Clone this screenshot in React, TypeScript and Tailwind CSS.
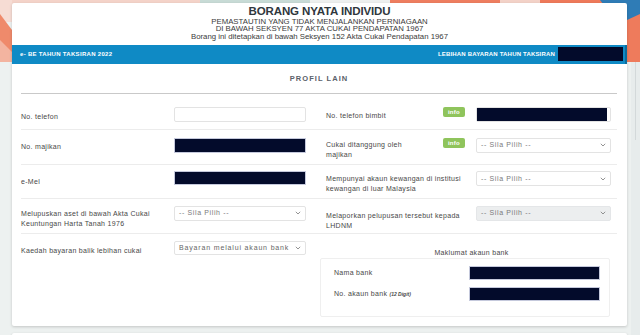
import type { ReactNode } from "react";

const BLACK = "bg-[#030b2b]";

function Chevron() {
  return (
    <svg width="6" height="4" viewBox="0 0 6 4" className="shrink-0">
      <path d="M0.8 0.8 L3 3 L5.2 0.8" fill="none" stroke="#777" strokeWidth="0.8" />
    </svg>
  );
}

function Select({ text, disabled, wide }: { text: string; disabled?: boolean; wide?: boolean }) {
  return (
    <div
      className={
        "h-full flex items-center justify-between pl-[4px] pr-[4px] border rounded-[2px] " +
        (disabled ? "bg-[#eceeef] border-[#e4e6e8]" : "bg-white border-[#e3e3e3]")
      }
    >
      <span
        className={
          "text-[7px] text-[#7a7a7a] whitespace-nowrap " +
          (wide ? "tracking-[0.12em] text-[#666]" : "tracking-[0.09em]")
        }
      >
        {text}
      </span>
      <Chevron />
    </div>
  );
}

function Masked() {
  return <div className={`h-full w-full ${BLACK} border border-[#c5c9dc]`} />;
}

function Info() {
  return (
    <div className="w-[22px] h-[10px] rounded-[2px] bg-[#8fc45c] flex items-center justify-center">
      <span className="text-[6px] font-bold text-white tracking-[0.05em] leading-none">info</span>
    </div>
  );
}

function Label({ children, pt }: { children: ReactNode; pt: string }) {
  return (
    <div className={`text-[7px] leading-[10px] tracking-[0.3px] text-[#474747] ${pt}`}>{children}</div>
  );
}

export default function App() {
  return (
    <div className="relative w-[640px] h-[335px] overflow-hidden bg-[#edf1f0] font-['Liberation_Sans',Arial,sans-serif]">
      {/* background decoration */}
      <svg className="absolute inset-0" width="640" height="335" viewBox="0 0 640 335">
        <rect x="0" y="0" width="200" height="6" fill="#f4d3c9" />
        <rect x="0" y="0" width="12" height="22" fill="#f6dcd4" />
        <polygon points="0,14 12,30 12,62 0,62" fill="#ef8a6b" />
        <polygon points="0,40 12,52 12,62 0,62" fill="#f3b4a0" />
        <rect x="200" y="0" width="110" height="6" fill="#c8dbd6" />
        <rect x="310" y="0" width="80" height="6" fill="#eef0ef" />
        <rect x="390" y="0" width="110" height="6" fill="#ee7e60" />
        <rect x="500" y="0" width="40" height="6" fill="#f3d2c8" />
        <rect x="540" y="0" width="80" height="6" fill="#ee7a5b" />
        <polygon points="600,0 640,0 640,26 627,36" fill="#2f7cb6" />
        <polygon points="627,20 640,14 640,62 627,62" fill="#ee7b5c" />
        <rect x="631" y="62" width="9" height="273" fill="#e7ecec" />
        <rect x="635" y="62" width="1" height="78" fill="#d3d9da" />
      </svg>

      <div className="relative pt-[3px] pl-[12px] pr-[13px] flex flex-col gap-[7px]">
        <div className="bg-white rounded-[2px] shadow-[0_1px_3px_rgba(0,0,0,0.18)] flex flex-col">
          {/* header */}
          <div className="pt-[3px] flex flex-col items-center text-[#2f373d]">
            <div className="text-[11.5px] font-bold leading-[11.5px] tracking-[-0.01em]">BORANG NYATA INDIVIDU</div>
            <div className="text-[7.8px] leading-[7.6px] text-[#3a3a3a] text-center">
              <div>PEMASTAUTIN YANG TIDAK MENJALANKAN PERNIAGAAN</div>
              <div>DI BAWAH SEKSYEN 77 AKTA CUKAI PENDAPATAN 1967</div>
              <div>Borang ini ditetapkan di bawah Seksyen 152 Akta Cukai Pendapatan 1967</div>
            </div>
          </div>

          {/* blue bar */}
          <div className="mt-[4.5px] h-[19px] bg-[#0f8ac5] border-r-[2px] border-[#0b6c9c] flex items-center justify-between pl-[8px] pr-[2px]">
            <span className="text-[6px] font-bold text-white tracking-[0.05em]">e- BE TAHUN TAKSIRAN 2022</span>
            <div className="flex items-center gap-[3px]">
              <span className="text-[6px] font-bold text-white tracking-[0.03em]">LEBIHAN BAYARAN TAHUN TAKSIRAN</span>
              <div className={`w-[65px] h-[14px] ${BLACK}`} />
            </div>
          </div>

          {/* section title */}
          <div className="ml-[9px] mr-[10px] h-[30px] flex items-center justify-center border-b-[1.5px] border-[#c9c9c9]">
            <span className="text-[7.5px] font-bold tracking-[0.14em] text-[#5a6169]">PROFIL LAIN</span>
          </div>

          <div className="ml-[9px] mr-[10px] flex flex-col">
            {/* row 1 */}
            <div className="h-[36px] flex border-b border-[#ececec]">
              <div className="w-[299px] flex items-start">
                <div className="w-[153px]">
                  <Label pt="pt-[18px]">No. telefon</Label>
                </div>
                <div className="w-[132px] h-[15px] mt-[13.5px] border border-[#e3e3e3] rounded-[2px] bg-white" />
              </div>
              <div className="flex-1 flex items-start pl-[6px]">
                <div className="w-[117px]">
                  <Label pt="pt-[17px]">No. telefon bimbit</Label>
                </div>
                <div className="mt-[13.5px]">
                  <Info />
                </div>
                <div className="ml-[11px] w-[135px] h-[15px] mt-[13.5px] border border-[#e3e3e3] rounded-[2px] bg-white">
                  <div className={`w-[130px] h-full ${BLACK}`} />
                </div>
              </div>
            </div>

            {/* row 2 */}
            <div className="h-[35px] flex border-b border-[#ececec]">
              <div className="w-[299px] flex items-start">
                <div className="w-[153px]">
                  <Label pt="pt-[12px]">No. majikan</Label>
                </div>
                <div className="w-[132px] h-[15px] mt-[8px]">
                  <Masked />
                </div>
              </div>
              <div className="flex-1 flex items-start pl-[6px]">
                <div className="w-[117px]">
                  <Label pt="pt-[10px]">
                    Cukai ditanggung oleh
                    <br />
                    majikan
                  </Label>
                </div>
                <div className="mt-[8px]">
                  <Info />
                </div>
                <div className="ml-[11px] w-[135px] h-[15px] mt-[8px]">
                  <Select text="-- Sila Pilih --" />
                </div>
              </div>
            </div>

            {/* row 3 */}
            <div className="h-[34px] flex border-b border-[#ececec]">
              <div className="w-[299px] flex items-start">
                <div className="w-[153px]">
                  <Label pt="pt-[12px]">e-Mel</Label>
                </div>
                <div className="w-[132px] h-[14px] mt-[6.5px]">
                  <Masked />
                </div>
              </div>
              <div className="flex-1 flex items-start pl-[6px]">
                <div className="w-[150px]">
                  <Label pt="pt-[9.5px]">
                    Mempunyai akaun kewangan di institusi
                    <br />
                    kewangan di luar Malaysia
                  </Label>
                </div>
                <div className="w-[135px] h-[15px] mt-[6.5px]">
                  <Select text="-- Sila Pilih --" />
                </div>
              </div>
            </div>

            {/* row 4 */}
            <div className="h-[35px] flex border-b border-[#ececec]">
              <div className="w-[299px] flex items-start">
                <div className="w-[153px]">
                  <Label pt="pt-[10.5px]">
                    Melupuskan aset di bawah Akta Cukai
                    <br />
                    Keuntungan Harta Tanah 1976
                  </Label>
                </div>
                <div className="w-[132px] h-[15px] mt-[7px]">
                  <Select text="-- Sila Pilih --" />
                </div>
              </div>
              <div className="flex-1 flex items-start pl-[6px]">
                <div className="w-[150px]">
                  <Label pt="pt-[12.5px]">
                    Melaporkan pelupusan tersebut kepada
                    <br />
                    LHDNM
                  </Label>
                </div>
                <div className="w-[135px] h-[15px] mt-[7px]">
                  <Select text="-- Sila Pilih --" disabled />
                </div>
              </div>
            </div>

            {/* row 5 */}
            <div className="flex pb-[9px]">
              <div className="w-[299px] flex items-start">
                <div className="w-[153px]">
                  <Label pt="pt-[12px]">Kaedah bayaran balik lebihan cukai</Label>
                </div>
                <div className="w-[132px] h-[14px] mt-[7.5px]">
                  <Select text="Bayaran melalui akaun bank" wide />
                </div>
              </div>
              <div className="flex-1 flex flex-col pr-[7px]">
                <div className="pt-[14px] pl-[13px] text-center text-[7px] leading-[10px] tracking-[0.3px] text-[#474747]">
                  Maklumat akaun bank
                </div>
                <div className="h-[59px] border border-[#efefef] rounded-[2px] pt-[7px] pl-[13px] pr-[9px] flex flex-col gap-[7px]">
                  <div className="h-[14px] flex items-center justify-between">
                    <span className="text-[7px] tracking-[0.3px] text-[#474747]">Nama bank</span>
                    <div className={`w-[131px] h-full ${BLACK} border border-[#c5c9dc]`} />
                  </div>
                  <div className="h-[14px] flex items-center justify-between">
                    <span className="text-[7px] tracking-[0.3px] text-[#474747]">
                      No. akaun bank <span className="text-[5px] font-bold italic tracking-normal">(12 Digit)</span>
                    </span>
                    <div className={`w-[131px] h-full ${BLACK} border border-[#c5c9dc]`} />
                  </div>
                </div>
              </div>
            </div>
          </div>
        </div>

        {/* next card peeking */}
        <div className="h-[20px] bg-white rounded-[2px] shadow-[0_1px_3px_rgba(0,0,0,0.18)]" />
      </div>
    </div>
  );
}
